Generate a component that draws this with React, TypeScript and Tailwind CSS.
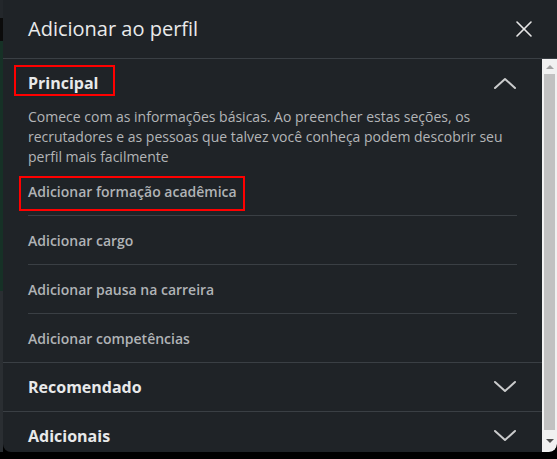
import { X } from "lucide-react";

const items = [
  "Adicionar formação acadêmica",
  "Adicionar cargo",
  "Adicionar pausa na carreira",
  "Adicionar competências",
];

function Chevron({ up }: { up?: boolean }) {
  return (
    <svg width="24" height="14" viewBox="0 0 24 14" fill="none" className="text-[#cbcccd]">
      <polyline
        points={up ? "2,12 12,3 22,12" : "2,2 12,11 22,2"}
        stroke="currentColor"
        strokeWidth="2"
        strokeLinecap="round"
        strokeLinejoin="round"
      />
    </svg>
  );
}

function Scrollbar() {
  return (
    <div className="w-[15px] bg-[#f1f1f1] flex flex-col items-center rounded-br-lg">
      <div className="h-[15px] flex items-center justify-center">
        <div className="w-0 h-0 border-l-[4px] border-r-[4px] border-b-[4px] border-l-transparent border-r-transparent border-b-[#a3a3a3]" />
      </div>
      <div className="w-[11px] h-[356px] bg-[#c1c1c1]" />
      <div className="flex-1 flex items-center justify-center">
        <div className="w-0 h-0 border-l-[4px] border-r-[4px] border-t-[4px] border-l-transparent border-r-transparent border-t-[#505050]" />
      </div>
    </div>
  );
}

export default function App() {
  return (
    <div
      className="w-[557px] h-[459px] bg-black overflow-hidden"
      style={{ fontFamily: '"Open Sans", "Noto Sans", sans-serif' }}
    >
      <div className="flex h-[452px]">
        <div className="w-[3px] flex flex-col">
          <div className="h-[18px] bg-[#23272b]" />
          <div className="h-[23px] bg-[#0b0b0b]" />
          <div className="h-[250px] bg-[#163126]" />
          <div className="flex-1 bg-[#2a2e32]" />
        </div>

        <div className="flex-1 flex flex-col bg-[#1f2327] rounded-b-lg overflow-hidden">
          <div className="h-[59px] shrink-0 flex items-center justify-between pl-[25px] pr-[19px] border-b border-[#3a3f44]">
            <h2 className="text-[20px] text-[#e9eaeb]">Adicionar ao perfil</h2>
            <X className="w-[28px] h-[28px] text-[#e6e6e6]" strokeWidth={1.4} />
          </div>

          <div className="flex-1 flex min-h-0">
            <div className="flex-1 overflow-hidden">
              <div className="px-[25px]">
                <div className="relative h-12 flex items-center justify-between">
                  <span className="text-[16px] font-bold text-[#e8e9ea]">Principal</span>
                  <Chevron up />
                  <div className="absolute left-[-14px] top-[6px] w-[101px] h-[31px] border-2 border-[#ff0000]" />
                </div>
                <p className="text-[14px] leading-5 text-[#b3b5b7]">
                  Comece com as informações básicas. Ao preencher estas seções, os recrutadores e as
                  pessoas que talvez você conheça podem descobrir seu perfil mais facilmente
                </p>
                <div>
                  {items.map((t, i) => (
                    <div
                      key={t}
                      className={`relative flex items-center ${
                        i < items.length - 1 ? "h-[49px] border-b border-[#3a3f44]" : "h-12"
                      }`}
                    >
                      <span className="text-[14px] font-semibold text-[#b0b3b6]">{t}</span>
                      {i === 0 && (
                        <div className="absolute left-[-9px] top-[9px] w-[226px] h-[35px] border-2 border-[#ff0000]" />
                      )}
                    </div>
                  ))}
                </div>
              </div>

              <div className="border-t border-[#3a3f44] px-[25px] h-[49px] flex items-center justify-between">
                <span className="text-[16px] font-bold text-[#e8e9ea]">Recomendado</span>
                <Chevron />
              </div>
              <div className="border-t border-[#3a3f44] px-[25px] h-[49px] flex items-center justify-between">
                <span className="text-[16px] font-bold text-[#e8e9ea]">Adicionais</span>
                <Chevron />
              </div>
            </div>
            <Scrollbar />
          </div>
        </div>
      </div>
    </div>
  );
}
